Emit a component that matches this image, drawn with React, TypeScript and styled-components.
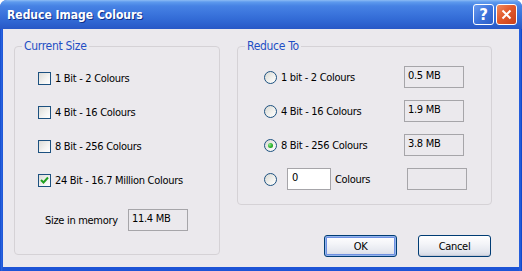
import React from 'react'
import styled, { createGlobalStyle } from 'styled-components'

const GlobalStyle = createGlobalStyle`
  html, body {
    margin: 0;
    padding: 0;
    background: #ffffff;
  }
  body {
    font-family: 'DejaVu Sans Condensed', 'DejaVu Sans', sans-serif;
    font-size: 11px;
    letter-spacing: -0.3px;
    color: #000000;
  }
`

const Window = styled.div`
  width: 522px;
  height: 271px;
  display: flex;
  flex-direction: column;
  background: linear-gradient(to right, #0a3fc4 0px, #2a66e0 1px, #1d54d6 3px, #1d54d6 519px, #2a66e0 520px, #0a3fc4 522px);
  border-radius: 7px 7px 0 0;
  overflow: hidden;
`

const TitleBar = styled.div`
  height: 29px;
  flex: none;
  display: flex;
  align-items: center;
  padding: 0 5px 0 7px;
  background: linear-gradient(
    to bottom,
    #8dbcf4 0px,
    #5d9aee 2px,
    #4682e4 6px,
    #3a74dc 14px,
    #2f66d2 22px,
    #2858c6 29px
  );
`

const Title = styled.div`
  flex: 1;
  color: #ffffff;
  font-family: 'DejaVu Sans Condensed', 'DejaVu Sans', sans-serif;
  font-weight: bold;
  font-size: 12px;
  letter-spacing: 0;
  text-shadow: 1px 1px 0 #0f2f8a;
  padding-top: 1px;
`

const CaptionButton = styled.div<{ $close?: boolean }>`
  width: 21px;
  height: 21px;
  box-sizing: border-box;
  border: 1px solid #ffffff;
  border-radius: 3px;
  margin-left: 2px;
  display: flex;
  align-items: center;
  justify-content: center;
  background: ${({ $close }) =>
    $close
      ? 'linear-gradient(135deg, #f08b5e 0%, #e25a2c 45%, #c9401a 100%)'
      : 'linear-gradient(135deg, #6b9cf0 0%, #3d74dc 50%, #2c5ec8 100%)'};
  color: #ffffff;
  font-family: 'DejaVu Sans', sans-serif;
  font-weight: bold;
  font-size: 15px;
  letter-spacing: 0;
`

const Client = styled.div`
  flex: 1;
  margin: 0 3px 4px 3px;
  background: #ebe9ed;
  display: flex;
  align-items: flex-start;
  padding: 11px 0 0 11px;
  gap: 17px;
`

const Group = styled.fieldset<{ $w: number; $h: number }>`
  margin: 0;
  padding: 0;
  min-width: 0;
  width: ${({ $w }) => $w}px;
  height: ${({ $h }) => $h}px;
  box-sizing: border-box;
  border: 1px solid #d5d2d6;
  border-radius: 4px;
  display: flex;
  flex-direction: column;
`

const Legend = styled.legend`
  margin-left: 7px;
  padding: 0 2px;
  color: #1f4fc4;
  font-size: 12px;
  line-height: 13px;
`

const Rows = styled.div<{ $top: number; $left: number }>`
  display: flex;
  flex-direction: column;
  gap: 12px;
  padding: ${({ $top, $left }) => `${$top}px 0 0 ${$left}px`};
`

const Row = styled.div`
  height: 22px;
  display: flex;
  align-items: center;
`

const Check = styled.span`
  width: 13px;
  height: 13px;
  box-sizing: border-box;
  border: 1px solid #1c5180;
  background: linear-gradient(135deg, #dcdcd7 0%, #f4f4f2 60%, #ffffff 100%);
  display: inline-flex;
  align-items: center;
  justify-content: center;
  flex: none;
`

const Radio = styled.span`
  width: 13px;
  height: 13px;
  box-sizing: border-box;
  border: 1px solid #1c5180;
  border-radius: 50%;
  background: linear-gradient(135deg, #d8d8d2 0%, #f2f2ef 60%, #ffffff 100%);
  display: inline-flex;
  align-items: center;
  justify-content: center;
  flex: none;
`

const Dot = styled.span`
  width: 5px;
  height: 5px;
  border-radius: 50%;
  background: radial-gradient(circle at 35% 35%, #8ee88e 0%, #2fb52f 50%, #128a12 100%);
`

const Label = styled.span<{ $w?: number }>`
  margin-left: 4px;
  white-space: nowrap;
  width: ${({ $w }) => ($w ? `${$w}px` : 'auto')};
  flex: none;
`

const ValueBox = styled.div`
  width: 60px;
  height: 22px;
  box-sizing: border-box;
  border: 1px solid #a6a5a9;
  padding: 2px 0 0 3px;
  line-height: 14px;
  flex: none;
`

const Edit = styled.div`
  width: 44px;
  height: 22px;
  box-sizing: border-box;
  border: 1px solid #a6a5a9;
  background: #ffffff;
  padding: 2px 0 0 4px;
  line-height: 14px;
  margin-left: 10px;
  flex: none;
`

const MemoryRow = styled.div`
  display: flex;
  align-items: center;
  height: 22px;
  margin: 18px 0 0 30px;
`

const MemoryLabel = styled.span`
  width: 83px;
  flex: none;
`

const RightColumn = styled.div`
  display: flex;
  flex-direction: column;
  width: 255px;
`

const Buttons = styled.div`
  display: flex;
  justify-content: flex-end;
  gap: 21px;
  margin-top: 30px;
  padding-right: 1px;
`

const Button = styled.div<{ $default?: boolean }>`
  width: 73px;
  height: 22px;
  box-sizing: border-box;
  border: 1px solid #003c74;
  border-radius: 3px;
  background: linear-gradient(to bottom, #ffffff 0%, #f3f4f8 40%, #e3e6ee 80%, #d2d6e2 100%);
  box-shadow: ${({ $default }) =>
    $default ? 'inset 0 0 0 1px #93b4ec, inset 0 0 0 2px #6d8fe0' : 'inset 0 -1px 0 #c4c9d6'};
  display: flex;
  align-items: center;
  justify-content: center;
`

const CheckMark = () => (
  <svg width="9" height="9" viewBox="0 0 9 9">
    <path d="M1 4 L3.5 6.5 L8 1.5" stroke="#21a121" strokeWidth="2" fill="none" />
  </svg>
)

const leftOptions = [
  { label: '1 Bit - 2 Colours', checked: false },
  { label: '4 Bit - 16 Colours', checked: false },
  { label: '8 Bit - 256 Colours', checked: false },
  { label: '24 Bit - 16.7 Million Colours', checked: true },
]

const rightOptions = [
  { label: '1 bit - 2 Colours', size: '0.5 MB', checked: false },
  { label: '4 Bit - 16 Colours', size: '1.9 MB', checked: false },
  { label: '8 Bit - 256 Colours', size: '3.8 MB', checked: true },
]

const App = () => (
  <>
    <GlobalStyle />
    <Window>
      <TitleBar>
        <Title>Reduce Image Colours</Title>
        <CaptionButton>?</CaptionButton>
        <CaptionButton $close>
          <svg width="11" height="11" viewBox="0 0 11 11">
            <path d="M1.5 1.5 L9.5 9.5 M9.5 1.5 L1.5 9.5" stroke="#ffffff" strokeWidth="2" />
          </svg>
        </CaptionButton>
      </TitleBar>
      <Client>
        <Group $w={206} $h={215}>
          <Legend>Current Size</Legend>
          <Rows $top={14} $left={23}>
            {leftOptions.map((o) => (
              <Row key={o.label}>
                <Check>{o.checked && <CheckMark />}</Check>
                <Label>{o.label}</Label>
              </Row>
            ))}
          </Rows>
          <MemoryRow>
            <MemoryLabel>Size in memory</MemoryLabel>
            <ValueBox>11.4 MB</ValueBox>
          </MemoryRow>
        </Group>
        <RightColumn>
          <Group $w={255} $h={165}>
            <Legend>Reduce To</Legend>
            <Rows $top={13} $left={26}>
              {rightOptions.map((o) => (
                <Row key={o.label}>
                  <Radio>{o.checked && <Dot />}</Radio>
                  <Label $w={123}>{o.label}</Label>
                  <ValueBox>{o.size}</ValueBox>
                </Row>
              ))}
              <Row>
                <Radio />
                <Edit>0</Edit>
                <Label $w={72}>Colours</Label>
                <ValueBox />
              </Row>
            </Rows>
          </Group>
          <Buttons>
            <Button $default>OK</Button>
            <Button>Cancel</Button>
          </Buttons>
        </RightColumn>
      </Client>
    </Window>
  </>
)

export default App
